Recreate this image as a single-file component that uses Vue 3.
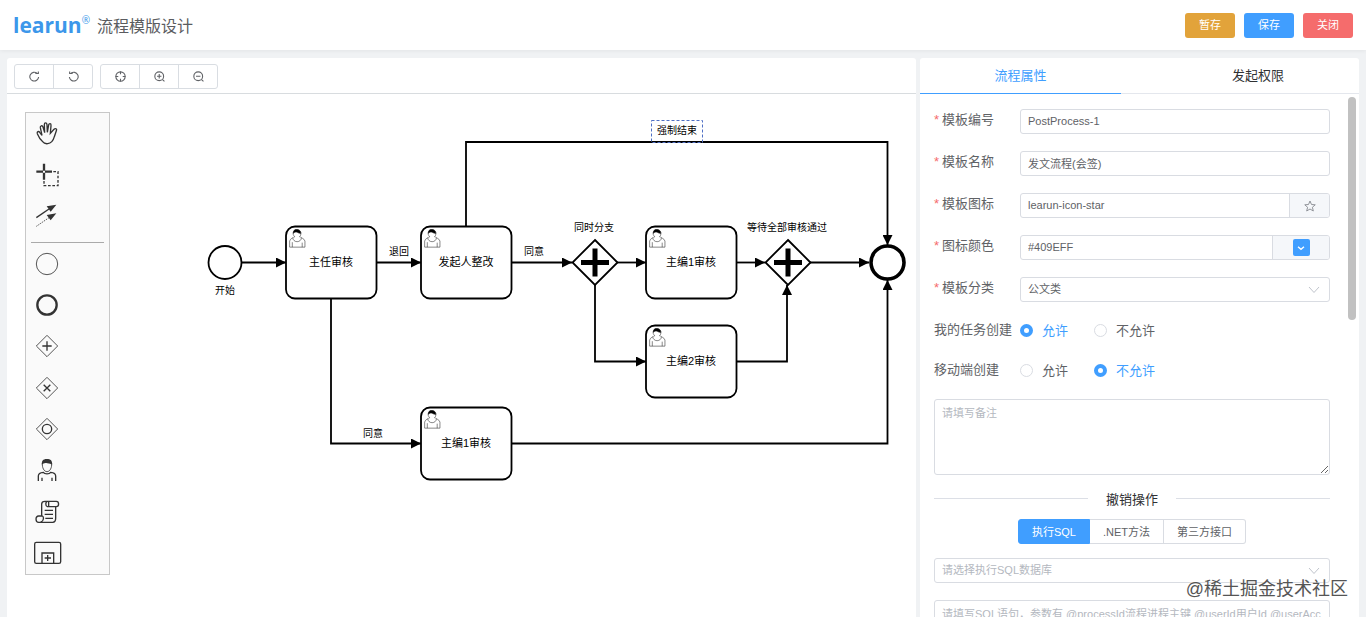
<script setup>
import { ref } from 'vue'

const code = ref('PostProcess-1')
const name = ref('发文流程(会签)')
const icon = ref('learun-icon-star')
const color = ref('#409EFF')
const category = ref('公文类')
const taskCreate = ref('yes')
const mobileCreate = ref('no')
const remark = ref('')
const database = ref('')
const sql = ref('')
const activeTab = ref('props')
const mode = ref('sql')

const tabs = [
  { key: 'props', label: '流程属性' },
  { key: 'auth', label: '发起权限' },
]
const modes = [
  { key: 'sql', label: '执行SQL' },
  { key: 'net', label: '.NET方法' },
  { key: 'api', label: '第三方接口' },
]
const tasks = [
  { id: 't1', x: 286, y: 226, label: '主任审核' },
  { id: 't2', x: 421, y: 226, label: '发起人整改' },
  { id: 't3', x: 646, y: 226, label: '主编1审核' },
  { id: 't4', x: 646, y: 325, label: '主编2审核' },
  { id: 't5', x: 421, y: 407, label: '主编1审核' },
]
const gateways = [
  { id: 'g1', x: 595, y: 262 },
  { id: 'g2', x: 788, y: 262 },
]
const flows = [
  'M242 262.5H286',
  'M377 262.5H421',
  'M512 262.5H572',
  'M617 262.5H646',
  'M737 262.5H765',
  'M810 262.5H869',
  'M466 226V142H887.5V245',
  'M331 299V443.5H421',
  'M512 443.5H887.5V280',
  'M595 285V361.5H646',
  'M737 361.5H787V285',
]
const labels = [
  { id: 'l1', x: 225, y: 294, text: '开始' },
  { id: 'l2', x: 399, y: 255, text: '退回' },
  { id: 'l3', x: 534, y: 255, text: '同意' },
  { id: 'l4', x: 594, y: 231, text: '同时分支' },
  { id: 'l5', x: 787, y: 231, text: '等待全部审核通过' },
  { id: 'l6', x: 373, y: 437, text: '同意' },
  { id: 'l7', x: 677, y: 134, text: '强制结束' },
]
</script>

<template>
  <div class="page">
    <header class="header">
      <div class="brand">
        <span class="logo">learun<sup>®</sup></span>
        <h1>流程模版设计</h1>
      </div>
      <div class="actions">
        <button class="btn warning" type="button">暂存</button>
        <button class="btn primary" type="button">保存</button>
        <button class="btn danger" type="button">关闭</button>
      </div>
    </header>

    <main class="body">
      <section class="designer">
        <div class="toolbar">
          <div class="tool-group">
            <button type="button" aria-label="重做">
              <svg viewBox="0 0 20 20"><path d="M17.500 11A8 8 0 1 1 14.500 4M11.500 4.500H17V1" /></svg>
            </button>
            <button type="button" aria-label="撤销">
              <svg viewBox="0 0 20 20"><path d="M2.500 11A8 8 0 1 0 5.500 4M8.500 4.500H3V1" /></svg>
            </button>
          </div>
          <div class="tool-group">
            <button type="button" aria-label="居中">
              <svg viewBox="0 0 20 20"><circle cx="10" cy="10" r="8.500" /><path d="M10 1V6M10 14V19M1 10H6M14 10H19" /></svg>
            </button>
            <button type="button" aria-label="放大">
              <svg viewBox="0 0 20 20"><circle cx="9.500" cy="9.500" r="8" /><path d="M15.500 15.500L19 19M5.500 9.500H13.500M9.500 5.500V13.500" /></svg>
            </button>
            <button type="button" aria-label="缩小">
              <svg viewBox="0 0 20 20"><circle cx="9.500" cy="9.500" r="8" /><path d="M15.500 15.500L19 19M5.500 9.500H13.500" /></svg>
            </button>
          </div>
        </div>

        <div class="canvas">
          <svg class="diagram" role="img" aria-label="流程图">
            <defs>
              <marker id="arrow" viewBox="0 0 10 10" refX="10" refY="5" markerWidth="10" markerHeight="10" markerUnits="userSpaceOnUse" orient="auto">
                <path d="M0 0L10 5L0 10Z" />
              </marker>
            </defs>
            <g transform="translate(-7 -94)">
              <path v-for="d in flows" :key="d" class="flow" :d="d" marker-end="url(#arrow)" />
              <circle class="shape" cx="225" cy="262.500" r="16.500" />
              <circle class="shape end" cx="887.500" cy="262.500" r="16.500" />
              <g v-for="t in tasks" :key="t.id" :transform="`translate(${t.x} ${t.y})`">
                <rect class="shape" x="0" y="0.500" width="90.500" height="72" rx="9" />
                <g class="person" transform="scale(.9)">
                  <path d="m15,12 c0.909,-0.845 1.594,-2.049 1.594,-3.385 0,-2.554 -1.805,-4.622 -4.357,-4.622 -2.552,0 -4.288,2.068 -4.288,4.622 0,1.348 0.974,2.562 1.896,3.405 -0.529,0.187 -5.669,2.097 -5.794,4.756 v6.718 h17 v-6.718 c0,-2.298 -5.528,-4.595 -6.051,-4.776zm-8,6 l0,5.500 m11,0 l0,-5" />
                  <path d="m17.162,13.009 c0,2.447 -2.158,4.431 -4.821,4.431 -2.665,0 -4.822,-1.981 -4.822,-4.431" />
                  <path class="hair" d="m8.100,8.200 c0,0 2.251,-2.358 4.274,-1.177 2.024,1.181 4.221,1.537 4.124,0.965 -0.098,-0.570 -0.117,-3.791 -4.191,-4.136 -3.578,-0.320 -4.340,2.200 -4.207,4.348z" />
                </g>
                <text class="task-label" x="45" y="40">{{ t.label }}</text>
              </g>
              <g v-for="g in gateways" :key="g.id" :transform="`translate(${g.x} ${g.y})`">
                <path class="shape" d="M0 -22L22.500 0.500L0 23L-22.500 0.500Z" />
                <path class="cross" d="M-14 0.500H14M0 -13.500V14.500" />
              </g>
              <rect class="selection" x="651.500" y="120.500" width="51" height="22" />
              <text v-for="l in labels" :key="l.id" class="flow-label" :x="l.x" :y="l.y">{{ l.text }}</text>
            </g>
          </svg>

          <div class="palette">
            <button type="button" aria-label="移动画布">
              <svg viewBox="0 0 72 72"><path class="mid" d="M22 58C14 51 10 42 7 35C5 29 11 26 14 31L21 40L16 17C15 11 22 9 24 15L29 32L28 8C28 1 35 1 36 8L37 31L41 9C42 3 49 4 48 11L46 34L57 22C61 18 67 20 64 26L58 44C55 55 49 64 38 65C31 66 26 63 22 58Z" /></svg>
            </button>
            <button type="button" aria-label="框选">
              <svg viewBox="0 0 72 72"><path class="heavy" d="M4 26H24M30 26H51M27 2V23M27 29V50" /><path class="mid dash" d="M55 26H69V68H27V54" /></svg>
            </button>
            <button type="button" aria-label="连线">
              <svg viewBox="0 0 72 72"><path d="M4 41L42 15" class="mid" /><path d="M4 67L42 41" class="dots" /><path class="solid" d="M64 2L35 7L47 23ZM64 28L35 33L47 49Z" /></svg>
            </button>
            <hr />
            <button type="button" aria-label="开始节点">
              <svg viewBox="0 0 72 72"><circle cx="36" cy="36" r="32" /></svg>
            </button>
            <button type="button" aria-label="结束节点">
              <svg viewBox="0 0 72 72"><circle class="heavy" cx="36" cy="36" r="29" /></svg>
            </button>
            <button type="button" aria-label="并行网关">
              <svg viewBox="0 0 72 72"><path d="M36 4L68 36L36 68L4 36Z" /><path class="mid" d="M22 36H50M36 22V50" /></svg>
            </button>
            <button type="button" aria-label="排他网关">
              <svg viewBox="0 0 72 72"><path d="M36 4L68 36L36 68L4 36Z" /><path class="mid" d="M26 26L46 46M46 26L26 46" /></svg>
            </button>
            <button type="button" aria-label="包容网关">
              <svg viewBox="0 0 72 72"><path d="M36 4L68 36L36 68L4 36Z" /><circle class="mid" cx="36" cy="36" r="14" /></svg>
            </button>
            <button type="button" aria-label="用户任务">
              <svg viewBox="0 0 72 72"><path d="M22 12C21 26 27 38 36 38S51 26 50 12" /><path class="solid" d="M21 18C19 6 24 0 35 0C47 0 53 5 51 18C48 14 44 15 37 13C29 11 25 13 21 18Z" /><path class="mid" d="M10 66V51C10 43 15 41 25 40C29 46 43 46 47 40C57 41 62 43 62 51V66M21 66V56M51 66V56" /></svg>
            </button>
            <button type="button" aria-label="脚本任务">
              <svg viewBox="0 0 72 72"><path class="mid" d="M20 48V12C20 6 25 4 30 4H64C73 4 73 20 64 20H37C31 18 31 5 37 5M41 6V18M62 21V55C62 63 59 67 53 67H11C1 67 0 48 11 48H22C27 50 27 64 17 66M29 31H54M29 43H54M31 55H54" /></svg>
            </button>
            <button type="button" aria-label="子流程">
              <svg viewBox="0 0 72 72"><rect class="mid" x="-1" y="4" width="78" height="63" rx="5" /><path class="mid" d="M21 67V36H56V67M29 51H48M38 42V60" /></svg>
            </button>
          </div>
        </div>
      </section>

      <aside class="panel">
        <div class="tabs" role="tablist">
          <button
            v-for="t in tabs" :key="t.key" type="button" role="tab"
            :aria-selected="activeTab === t.key" :class="{ active: activeTab === t.key }"
            @click="activeTab = t.key"
          >{{ t.label }}</button>
        </div>

        <form class="form" @submit.prevent>
          <div class="field">
            <label class="required" for="code">模板编号</label>
            <input id="code" v-model="code" class="control" type="text" />
          </div>
          <div class="field">
            <label class="required" for="name">模板名称</label>
            <input id="name" v-model="name" class="control" type="text" />
          </div>
          <div class="field">
            <label class="required" for="icon">模板图标</label>
            <div class="control group">
              <input id="icon" v-model="icon" type="text" />
              <button class="append" type="button" aria-label="选择图标">
                <svg viewBox="0 0 24 24"><path d="M12 2L15 9L22.500 9.600L16.800 14.500L18.600 22L12 18L5.400 22L7.200 14.500L1.500 9.600L9 9Z" /></svg>
              </button>
            </div>
          </div>
          <div class="field">
            <label class="required" for="color">图标颜色</label>
            <div class="control group">
              <input id="color" v-model="color" type="text" />
              <button class="append wide" type="button" aria-label="选择颜色">
                <span class="swatch"><svg viewBox="0 0 12 12"><path d="M1.500 4L6 8L10.500 4" /></svg></span>
              </button>
            </div>
          </div>
          <div class="field">
            <label class="required" for="category">模板分类</label>
            <div class="select">
              <select id="category" v-model="category" class="control">
                <option>公文类</option>
              </select>
              <svg viewBox="0 0 12 12"><path d="M1 3L6 8.500L11 3" /></svg>
            </div>
          </div>
          <div class="field radios" role="radiogroup" aria-labelledby="task-create">
            <span id="task-create" class="caption">我的任务创建</span>
            <div class="options">
              <label><input v-model="taskCreate" type="radio" name="task" value="yes" /><span>允许</span></label>
              <label><input v-model="taskCreate" type="radio" name="task" value="no" /><span>不允许</span></label>
            </div>
          </div>
          <div class="field radios" role="radiogroup" aria-labelledby="mobile-create">
            <span id="mobile-create" class="caption">移动端创建</span>
            <div class="options">
              <label><input v-model="mobileCreate" type="radio" name="mobile" value="yes" /><span>允许</span></label>
              <label><input v-model="mobileCreate" type="radio" name="mobile" value="no" /><span>不允许</span></label>
            </div>
          </div>
          <textarea v-model="remark" class="control area" aria-label="备注" placeholder="请填写备注"></textarea>

          <section class="revoke">
            <h2>撤销操作</h2>
            <div class="modes">
              <button
                v-for="m in modes" :key="m.key" type="button"
                :class="{ active: mode === m.key }" @click="mode = m.key"
              >{{ m.label }}</button>
            </div>
            <div class="select">
              <select v-model="database" class="control empty" aria-label="执行SQL数据库">
                <option value="">请选择执行SQL数据库</option>
              </select>
              <svg viewBox="0 0 12 12"><path d="M1 3L6 8.500L11 3" /></svg>
            </div>
          </section>
          <textarea v-model="sql" class="control area" aria-label="SQL语句" placeholder="请填写SQL语句，参数有 @processId流程进程主键 @userId用户Id @userAcc"></textarea>
        </form>
        <div class="scroll-thumb"></div>
      </aside>
    </main>
    <div class="watermark">@稀土掘金技术社区</div>
  </div>
</template>

<style>
body {
  margin: 0;
}
</style>

<style scoped>
.page {
  position: relative;
  display: flex;
  flex-direction: column;
  height: 100vh;
  overflow: hidden;
  background: #f0f2f4;
  color: #606266;
  font-family: "Liberation Sans", "Noto Sans CJK SC", sans-serif;
  font-size: 13px;
}
.page *,
.page *::before,
.page *::after {
  box-sizing: border-box;
}
button,
input,
select,
textarea {
  margin: 0;
  padding: 0;
  border: 0;
  background: none;
  color: inherit;
  font: inherit;
  outline: none;
}
svg {
  display: block;
  fill: none;
  stroke: currentColor;
}

.header {
  display: flex;
  flex: none;
  align-items: center;
  justify-content: space-between;
  height: 50px;
  padding: 0 13px;
  background: #fff;
  box-shadow: 0 1px 4px rgba(0, 0, 0, 0.06);
}
.brand {
  display: flex;
  align-items: center;
  gap: 7px;
}
.logo {
  display: flex;
  align-items: flex-start;
  color: #3c97ea;
  font: 700 21px/30px "Open Sans", sans-serif;
}
.logo sup {
  padding-top: 4px;
  font: 400 10px/12px "Open Sans", sans-serif;
}
h1 {
  margin: 0;
  padding-top: 3px;
  color: #5a5c60;
  font-size: 16px;
  font-weight: 400;
  line-height: 24px;
}
.actions {
  display: flex;
  gap: 9px;
}
.btn {
  width: 50px;
  height: 25px;
  padding-bottom: 2px;
  border-radius: 3px;
  color: #fff;
  font-size: 11px;
}
.warning {
  background: #e2a33a;
}
.primary {
  background: #409eff;
}
.danger {
  background: #f56c6c;
}

.body {
  display: grid;
  flex: 1;
  grid-template-columns: minmax(0, 1fr) 439px;
  gap: 4px;
  min-height: 0;
  padding: 8px 7px 0;
}
.designer {
  display: flex;
  flex-direction: column;
  min-height: 0;
  border-radius: 3px 3px 0 0;
  background: #fff;
}
.toolbar {
  display: flex;
  flex: none;
  gap: 7px;
  height: 36px;
  padding: 6px 7px 0;
  border-bottom: 1px solid #d8dcdf;
}
.tool-group {
  display: flex;
  height: 25px;
  border: 1px solid #d9dde2;
  border-radius: 3px;
}
.tool-group button {
  display: grid;
  place-items: center;
  width: 38px;
}
.tool-group button + button {
  width: 39px;
  border-left: 1px solid #d9dde2;
}
.tool-group svg {
  width: 11px;
  height: 11px;
  stroke-width: 2;
}
.canvas {
  position: relative;
  flex: 1;
  min-height: 0;
}
.diagram {
  width: 100%;
  height: 100%;
}
.flow {
  stroke: #000;
  stroke-width: 1.8;
}
marker path {
  fill: #000;
  stroke: none;
}
.shape {
  fill: #fff;
  stroke: #000;
  stroke-width: 1.8;
}
.end {
  stroke-width: 3.6;
}
.cross {
  stroke: #000;
  stroke-width: 5;
}
.person {
  fill: #fff;
  stroke: #222;
  stroke-width: 0.6;
}
.hair {
  fill: #000;
}
.task-label,
.flow-label {
  fill: #000;
  stroke: none;
  text-anchor: middle;
  font-size: 11px;
}
.flow-label {
  font-size: 10px;
}
.selection {
  stroke: #4f6fc4;
  stroke-dasharray: 3 2;
}

.palette {
  position: absolute;
  top: 18px;
  left: 18px;
  display: grid;
  grid-template-rows: repeat(3, 1fr) 6px repeat(8, 1fr);
  width: 85px;
  height: 463px;
  border: 1px solid #c8c8c8;
  background: #fafafa;
  color: #333;
}
.palette button {
  display: grid;
  place-items: center;
  width: 42px;
}
.palette svg {
  width: 24px;
  height: 24px;
  overflow: visible;
  stroke-width: 2.5;
}
.palette hr {
  align-self: end;
  margin: 0 5px;
  border: 0;
  border-top: 1px solid #aaa;
}
.palette .mid {
  stroke-width: 4;
}
.palette .heavy {
  stroke-width: 7;
}
.palette .dash {
  stroke-dasharray: 8 5;
}
.palette .dots {
  stroke-dasharray: 4 3;
}
.palette .solid {
  fill: #333;
  stroke: none;
}

.panel {
  position: relative;
  display: flex;
  flex-direction: column;
  min-height: 0;
  border-radius: 3px 3px 0 0;
  background: #fff;
}
.tabs {
  display: grid;
  flex: none;
  grid-template-columns: 201px 1fr;
  height: 36px;
  border-bottom: 1px solid #e4e7ed;
}
.tabs button {
  height: 36px;
  padding-bottom: 3px;
  border-bottom: 1px solid transparent;
  color: #303133;
}
.tabs button + button {
  padding-left: 36px;
}
.tabs .active {
  border-bottom-color: #409eff;
  color: #409eff;
}
.form {
  display: flex;
  flex: 1;
  flex-direction: column;
  gap: 17px;
  min-height: 0;
  padding: 15px 29px 0 14px;
  overflow: hidden;
}
.form > * {
  flex: none;
}
.field {
  display: grid;
  grid-template-columns: 86px 1fr;
  height: 25px;
}
.field.radios {
  height: 23px;
}
.required,
.caption {
  line-height: 22px;
}
.required::before {
  display: inline-block;
  width: 8px;
  color: #f56c6c;
  content: "*";
}
.control {
  width: 100%;
  height: 25px;
  padding: 0 7px 2px;
  border: 1px solid #d9dce2;
  border-radius: 3px;
  background: #fff;
  font-size: 11px;
}
.group {
  display: flex;
  padding: 0;
  overflow: hidden;
}
.group input {
  flex: 1;
  min-width: 0;
  padding: 0 7px 2px;
}
.append {
  display: grid;
  place-items: center;
  width: 40px;
  border-left: 1px solid #d9dce2;
  background: #f5f7fa;
  color: #909399;
}
.append svg {
  width: 12px;
  height: 12px;
  stroke-width: 2;
}
.wide {
  width: 57px;
}
.append .swatch {
  display: grid;
  place-items: center;
  width: 17px;
  height: 17px;
  border-radius: 2px;
  background: #409eff;
  color: #fff;
}
.append .swatch svg {
  width: 8px;
  height: 8px;
}
.select {
  position: relative;
}
.select select {
  appearance: none;
}
.select svg {
  position: absolute;
  top: 7px;
  right: 10px;
  width: 12px;
  height: 12px;
  color: #c0c4cc;
  pointer-events: none;
}
.empty {
  color: #b4b8c0;
}
.options {
  display: flex;
  gap: 26px;
}
.options label {
  display: flex;
  align-items: center;
  gap: 9px;
  line-height: 22px;
}
.options input {
  width: 13px;
  height: 13px;
  border: 1px solid #d9dce2;
  border-radius: 50%;
  background: #fff;
  appearance: none;
}
.options input:checked {
  border: 4px solid #409eff;
}
.options input:checked + span {
  color: #409eff;
}
.area {
  display: block;
  height: 76px;
  padding: 5px 4px 5px 7px;
  line-height: 16px;
  resize: vertical;
}
.area::placeholder {
  color: #b4b8c0;
}
.revoke {
  display: grid;
  gap: 14px;
}
h2 {
  display: flex;
  align-items: center;
  gap: 18px;
  height: 13px;
  margin: 0;
  color: #303133;
  font-size: 13px;
  font-weight: 400;
}
h2::before,
h2::after {
  flex: 1;
  height: 1px;
  background: #dcdfe6;
  content: "";
}
.modes {
  display: flex;
  justify-content: center;
  height: 25px;
}
.modes button {
  padding: 0 13px 2px;
  border: 1px solid #d9dce2;
  border-left: 0;
  font-size: 11px;
}
.modes button:first-child {
  border-left: 1px solid #409eff;
  border-radius: 3px 0 0 3px;
}
.modes button:last-child {
  border-radius: 0 3px 3px 0;
}
.modes .active {
  border-color: #409eff;
  background: #409eff;
  color: #fff;
}
.scroll-thumb {
  position: absolute;
  top: 39px;
  right: 3px;
  width: 8px;
  height: 223px;
  border-radius: 4px;
  background: #c1c1c1;
}
.watermark {
  position: absolute;
  right: 18px;
  bottom: 15px;
  color: #555;
  font-size: 18px;
  line-height: 26px;
  text-shadow: 0 0 2px #fff;
  pointer-events: none;
}
</style>
